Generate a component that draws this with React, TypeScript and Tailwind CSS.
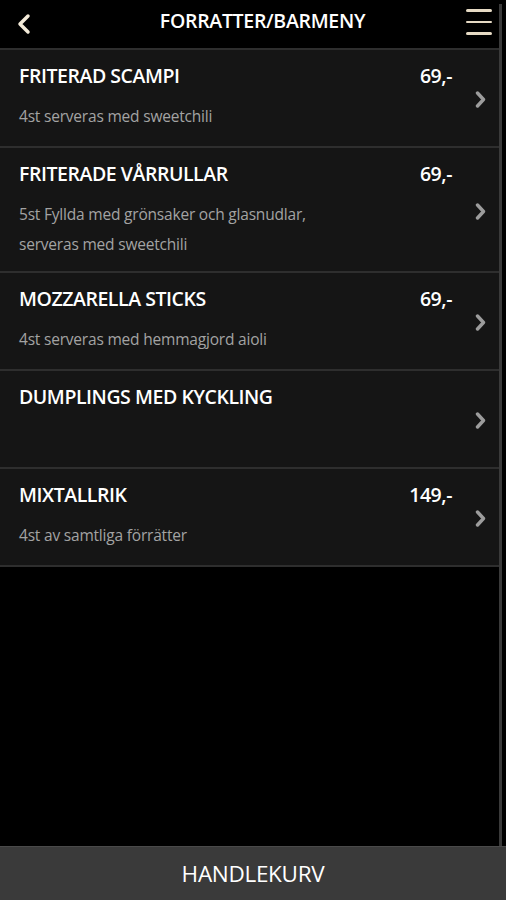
import React from 'react';

const items = [
  { name: 'FRITERAD SCAMPI', price: '69,-', desc: ['4st serveras med sweetchili'] },
  {
    name: 'FRITERADE VÅRRULLAR',
    price: '69,-',
    desc: ['5st Fyllda med grönsaker och glasnudlar,', 'serveras med sweetchili'],
  },
  { name: 'MOZZARELLA STICKS', price: '69,-', desc: ['4st serveras med hemmagjord aioli'] },
  { name: 'DUMPLINGS MED KYCKLING', price: '', desc: [] },
  { name: 'MIXTALLRIK', price: '149,-', desc: ['4st av samtliga förrätter'] },
];

function Chevron({ className }: { className?: string }) {
  return (
    <svg width="14" height="18" viewBox="0 0 14 18" className={className}>
      <path d="M4.5 3 L10.5 9.5 L4.5 16" fill="none" stroke="currentColor" strokeWidth="3.4" strokeLinecap="round" strokeLinejoin="round" />
    </svg>
  );
}

export default function App() {
  return (
    <div className="w-[506px] h-[900px] bg-black flex flex-col overflow-hidden" style={{ fontFamily: '"Open Sans", "Liberation Sans", sans-serif' }}>
      <div className="flex-1 flex min-h-0">
        <div className="flex-1 flex flex-col">
          {/* header */}
          <div className="h-[50px] flex items-center justify-between pl-[15px] pr-[7px] border-b-2 border-[#2e2e2e]">
            <svg width="18" height="24" viewBox="0 0 18 24" className="text-[#f3ead8]">
              <path d="M13 4 L5 12 L13 20" fill="none" stroke="currentColor" strokeWidth="3.5" strokeLinecap="round" strokeLinejoin="round" />
            </svg>
            <h1 className="text-white text-[19.5px] font-semibold tracking-[-0.3px] ml-[26px] -mt-[7px]">FORRATTER/BARMENY</h1>
            <div className="flex flex-col gap-[9px] -mt-[4px]">
              <span className="block w-[26px] h-[2.5px] bg-[#e6dac4] rounded" />
              <span className="block w-[26px] h-[2.5px] bg-[#e6dac4] rounded" />
              <span className="block w-[26px] h-[2.5px] bg-[#e6dac4] rounded" />
            </div>
          </div>
          {/* list */}
          {items.map((it) => (
            <div key={it.name} className="flex items-center bg-[#151515] border-b-2 border-[#2e2e2e] min-h-[98px] pt-[14px] pb-[12px]">
              <div className="flex-1 pl-[19px] self-start">
                <div className="flex justify-between items-center h-[24px]">
                  <span className="text-white text-[19.5px] font-semibold tracking-[-0.45px]">{it.name}</span>
                  <span className="text-white text-[19.5px] font-semibold tracking-[-0.45px]">{it.price}</span>
                </div>
                <div className="mt-[13px]">
                  {it.desc.map((d) => (
                    <div key={d} className="text-[#a3a3a3] text-[15.5px] leading-[30px] tracking-[-0.2px]">{d}</div>
                  ))}
                </div>
              </div>
              <div className="w-[47px] flex pl-[21px]">
                <Chevron className="text-[#9c9c9c]" />
              </div>
            </div>
          ))}
        </div>
        {/* scrollbar */}
        <div className="w-[7px] flex pt-[4px]">
          <div className="w-[3px] bg-[#3a3a3a]" />
        </div>
      </div>
      <div className="h-[54px] bg-[#3a3a3a] border-t border-[#4a4a4a] flex items-center justify-center">
        <span className="text-white text-[22.5px] font-medium tracking-[-0.3px]">HANDLEKURV</span>
      </div>
    </div>
  );
}
